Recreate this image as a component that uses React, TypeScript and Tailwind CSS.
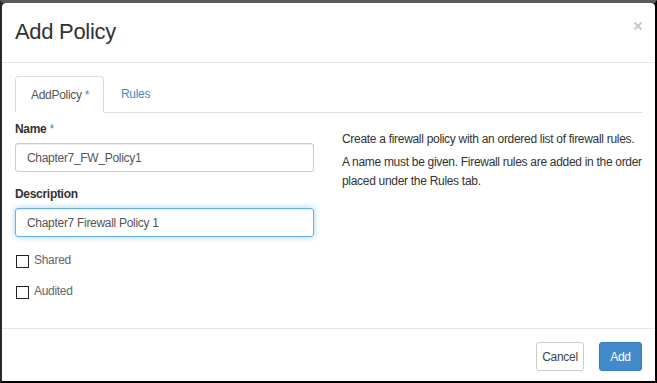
import React from "react";

export default function App() {
  const font = "font-['Liberation_Sans',Arial,sans-serif]";
  return (
    <div
      className={`w-[657px] h-[383px] bg-black border-t-[3px] border-t-[#5a5a5a] border-l-2 border-l-[#2a2a2a] border-r-2 border-r-black border-b-2 border-b-black ${font}`}
    >
      <div className="w-full h-full bg-white rounded-t-[4px] flex flex-col">
        {/* Header */}
        <div className="relative h-[60px] shrink-0 border-b border-[#e5e5e5] flex items-center pl-[13px] pb-[2px]">
          <h3 className="text-[22px] leading-none tracking-[-0.3px] text-[#333]">Add Policy</h3>
          <svg
            className="absolute left-[631px] top-[18px]"
            width="10"
            height="10"
            viewBox="0 0 10 10"
          >
            <path d="M1.5 1.5 L8.5 8.5 M8.5 1.5 L1.5 8.5" stroke="#c8c8c8" strokeWidth="2" />
          </svg>
        </div>

        {/* Body */}
        <div className="flex-1 px-[13px] pt-[13px]">
          <div className="flex border-b border-[#ddd] h-[37px]">
            <div className="h-[37px] px-[15px] flex items-center border border-[#ddd] border-b-white rounded-t-[4px] bg-white text-[12px] tracking-[-0.3px] text-[#555] w-[89px]">
              AddPolicy&nbsp;<span className="text-[#428bca]">*</span>
            </div>
            <div className="ml-[2px] h-[36px] px-[15px] flex items-center text-[12px] tracking-[-0.3px] text-[#428bca]">
              Rules
            </div>
          </div>

          <div className="grid grid-cols-[299px_1fr] gap-x-[28px]">
            <div className="pt-[8px]">
              <div className="h-[17px] leading-[17px] text-[12px] font-bold tracking-[-0.3px] text-[#333] mb-[5px]">
                Name <span className="text-[#428bca] font-normal">*</span>
              </div>
              <input
                readOnly
                value="Chapter7_FW_Policy1"
                className="block w-[299px] h-[29px] border border-[#ccc] rounded-[3px] px-[11px] text-[12px] tracking-[-0.3px] text-[#555] outline-none shadow-[inset_0_1px_1px_rgba(0,0,0,0.075)]"
              />
              <div className="mt-[14px] h-[17px] leading-[17px] text-[12px] font-bold tracking-[-0.3px] text-[#333] mb-[5px]">
                Description
              </div>
              <input
                readOnly
                value="Chapter7 Firewall Policy 1"
                className="block w-[299px] h-[29px] border border-[#66afe9] rounded-[3px] px-[11px] text-[12px] tracking-[-0.3px] text-[#555] outline-none shadow-[inset_0_1px_1px_rgba(0,0,0,0.075),0_0_6px_rgba(102,175,233,0.6)]"
              />
              <div className="mt-[15px] h-[17px] flex items-center">
                <div className="w-[13px] h-[13px] border border-[#222] bg-white ml-[1px] mt-[1px]" />
                <span className="ml-[5px] text-[12px] tracking-[-0.3px] text-[#666] leading-[17px]">Shared</span>
              </div>
              <div className="mt-[14px] h-[17px] flex items-center">
                <div className="w-[13px] h-[13px] border border-[#222] bg-white ml-[1px] mt-[1px]" />
                <span className="ml-[5px] text-[12px] tracking-[-0.3px] text-[#666] leading-[17px]">Audited</span>
              </div>
            </div>
            <div className="pt-[17px] -mr-[12px] text-[12px] tracking-[-0.3px] text-[#333] leading-[19px]">
              <p>Create a firewall policy with an ordered list of firewall rules.</p>
              <p className="mt-[4px]">
                A name must be given. Firewall rules are added in the order placed under the Rules tab.
              </p>
            </div>
          </div>
        </div>

        {/* Footer */}
        <div className="h-[53px] shrink-0 border-t border-[#e5e5e5] flex justify-end items-start pt-[13px] pr-[13px] gap-[15px]">
          <button className="w-[48px] h-[29px] border border-[#ccc] rounded-[3px] bg-white text-[12px] tracking-[-0.3px] text-[#444]">
            Cancel
          </button>
          <button className="w-[43px] h-[29px] border border-[#357ebd] rounded-[3px] bg-[#428bca] text-[12px] tracking-[-0.3px] text-white">
            Add
          </button>
        </div>
      </div>
    </div>
  );
}
